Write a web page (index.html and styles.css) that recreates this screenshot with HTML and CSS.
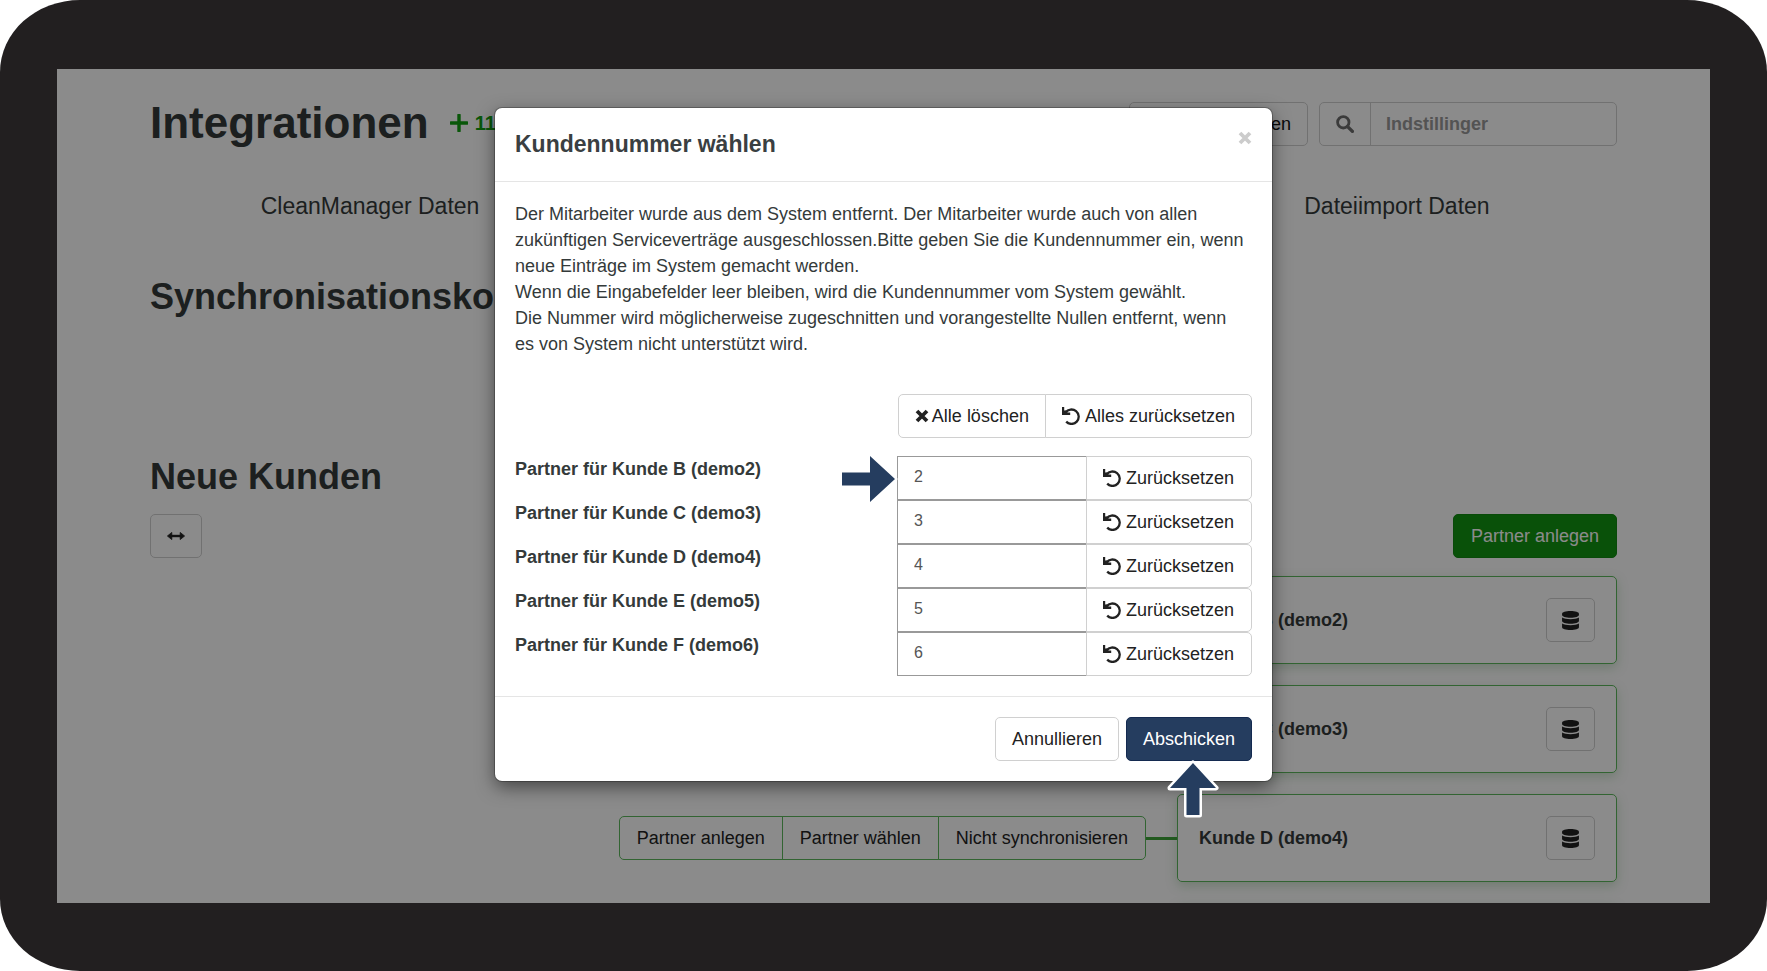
FILE: index.html
```html
<!DOCTYPE html>
<html lang="de">
<head>
<meta charset="utf-8">
<meta name="viewport" content="width=device-width, initial-scale=1">
<title>Integrationen</title>
<link rel="stylesheet" href="styles.css">
</head>
<body>
<svg class="sprite" aria-hidden="true">
  <symbol id="undo" viewBox="0 0 18 18">
    <path d="M3.600 5.600A7.200 7.200 0 1 1 4.200 14.600" fill="none" stroke="currentColor" stroke-width="2.300"/>
    <path d="M0 0H2.200V3.400L4.400 3.200L5.400 5.600H8.200V8H0z"/>
  </symbol>
  <symbol id="cross" viewBox="0 0 14 14">
    <path d="M2 2L12 12M12 2L2 12" fill="none" stroke="currentColor" stroke-width="3.8"/>
  </symbol>
  <symbol id="database" viewBox="0 0 16 18">
    <path d="M0 2.6C0 1 3.4 0 8 0s8 1 8 2.600v1.200C16 5.300 12.600 6.400 8 6.400S0 5.300 0 3.800z"/>
    <path d="M0 6.200C1.800 7.300 4.700 7.800 8 7.800s6.200-.5 8-1.600v3.200C16 10.900 12.600 12 8 12S0 10.900 0 9.400z"/>
    <path d="M0 11.900c1.800 1.100 4.700 1.600 8 1.600s6.200-.5 8-1.600v3.500C16 17 12.600 18 8 18s-8-1-8-2.600z"/>
  </symbol>
</svg>

<div class="frame">
  <div class="screen">
    <main class="page">
      <header class="page-header">
        <h1 class="page-title">Integrationen</h1>
        <span class="counter">
          <svg class="plus" viewBox="0 0 18 18" aria-hidden="true"><path d="M9 1V17M1 9H17" fill="none" stroke="currentColor" stroke-width="3.4" stroke-linecap="round"/></svg>
          11
        </span>
        <div class="page-tools">
          <button class="btn btn-wide" type="button">en</button>
          <div class="search">
            <label class="search-icon" for="search">
              <svg class="icon-md" viewBox="0 0 18 18" role="img" aria-label="Suche"><circle cx="7.300" cy="7.300" r="5.700" fill="none" stroke="currentColor" stroke-width="2.800"/><path d="M11.600 11.600L16.400 16.400" stroke="currentColor" stroke-width="3.400" stroke-linecap="round"/></svg>
            </label>
            <input class="search-input" id="search" type="text" placeholder="Indstillinger">
          </div>
        </div>
      </header>

      <div class="sources">
        <span class="source">CleanManager Daten</span>
        <span></span>
        <span class="source">Dateiimport Daten</span>
      </div>

      <h2 class="section-title">Synchronisationsko</h2>
      <h2 class="section-title section-new">Neue Kunden</h2>

      <div class="actions">
        <button class="btn btn-resize" type="button" aria-label="Verbreitern">
          <svg class="icon-md" viewBox="0 0 18 18" aria-hidden="true"><path d="M4 9H14" stroke="currentColor" stroke-width="2.400"/><path d="M4.800 5.400V12.600L.4 9zM13.200 5.400V12.600L17.600 9z" fill="currentColor" stroke="currentColor" stroke-width=".8" stroke-linejoin="round"/></svg>
        </button>
        <button class="btn btn-green" type="button">Partner anlegen</button>
      </div>

      <div class="rows">
        <div class="row">
          <article class="card"><strong>Kunde B (demo2)</strong><button class="btn btn-icon" type="button" aria-label="Daten"><svg class="icon-db" aria-hidden="true"><use href="#database"/></svg></button></article>
        </div>
        <div class="row">
          <article class="card"><strong>Kunde C (demo3)</strong><button class="btn btn-icon" type="button" aria-label="Daten"><svg class="icon-db" aria-hidden="true"><use href="#database"/></svg></button></article>
        </div>
        <div class="row">
          <div class="group group-green">
            <button class="btn" type="button">Partner anlegen</button>
            <button class="btn" type="button">Partner wählen</button>
            <button class="btn" type="button">Nicht synchronisieren</button>
          </div>
          <span class="connector"></span>
          <article class="card"><strong>Kunde D (demo4)</strong><button class="btn btn-icon" type="button" aria-label="Daten"><svg class="icon-db" aria-hidden="true"><use href="#database"/></svg></button></article>
        </div>
        <div class="row">
          <article class="card"></article>
        </div>
      </div>
    </main>

    <div class="backdrop">
      <section class="modal" role="dialog" aria-labelledby="modal-title">
        <header class="modal-header">
          <h3 class="modal-title" id="modal-title">Kundennummer wählen</h3>
          <button class="close" type="button" aria-label="Schließen"><svg class="icon-sm" aria-hidden="true"><use href="#cross"/></svg></button>
        </header>
        <div class="modal-body">
          <p class="message">Der Mitarbeiter wurde aus dem System entfernt. Der Mitarbeiter wurde auch von allen zukünftigen Serviceverträge ausgeschlossen.Bitte geben Sie die Kundennummer ein, wenn neue Einträge im System gemacht werden.<br>Wenn die Eingabefelder leer bleiben, wird die Kundennummer vom System gewählt.<br>Die Nummer wird möglicherweise zugeschnitten und vorangestellte Nullen entfernt, wenn es&nbsp;von System nicht unterstützt wird.</p>
          <div class="bulk">
            <div class="group">
              <button class="btn" type="button"><svg class="icon-sm" aria-hidden="true"><use href="#cross"/></svg>Alle löschen</button>
              <button class="btn" type="button"><svg class="icon-md" aria-hidden="true"><use href="#undo"/></svg>Alles zurücksetzen</button>
            </div>
          </div>
          <div class="field">
            <label class="field-label" for="n2">Partner für Kunde B (demo2)</label>
            <div class="field-control">
              <input class="field-input" id="n2" type="text" value="2">
              <button class="btn btn-reset" type="button"><svg class="icon-md" aria-hidden="true"><use href="#undo"/></svg>Zurücksetzen</button>
              <svg class="pointer pointer-right" viewBox="0 0 58 52" aria-hidden="true"><path d="M3 19.500H31V3L56 26L31 49V32.500H3z"/></svg>
            </div>
          </div>
          <div class="field">
            <label class="field-label" for="n3">Partner für Kunde C (demo3)</label>
            <div class="field-control">
              <input class="field-input" id="n3" type="text" value="3">
              <button class="btn btn-reset" type="button"><svg class="icon-md" aria-hidden="true"><use href="#undo"/></svg>Zurücksetzen</button>
            </div>
          </div>
          <div class="field">
            <label class="field-label" for="n4">Partner für Kunde D (demo4)</label>
            <div class="field-control">
              <input class="field-input" id="n4" type="text" value="4">
              <button class="btn btn-reset" type="button"><svg class="icon-md" aria-hidden="true"><use href="#undo"/></svg>Zurücksetzen</button>
            </div>
          </div>
          <div class="field">
            <label class="field-label" for="n5">Partner für Kunde E (demo5)</label>
            <div class="field-control">
              <input class="field-input" id="n5" type="text" value="5">
              <button class="btn btn-reset" type="button"><svg class="icon-md" aria-hidden="true"><use href="#undo"/></svg>Zurücksetzen</button>
            </div>
          </div>
          <div class="field">
            <label class="field-label" for="n6">Partner für Kunde F (demo6)</label>
            <div class="field-control">
              <input class="field-input" id="n6" type="text" value="6">
              <button class="btn btn-reset" type="button"><svg class="icon-md" aria-hidden="true"><use href="#undo"/></svg>Zurücksetzen</button>
            </div>
          </div>
        </div>
        <footer class="modal-footer">
          <button class="btn" type="button">Annullieren</button>
          <div class="submit">
            <button class="btn btn-navy" type="submit">Abschicken</button>
            <svg class="pointer pointer-up" viewBox="0 0 52 58" aria-hidden="true"><path d="M26 3L49 28H32.500V55H19.500V28H3z"/></svg>
          </div>
        </footer>
      </section>
    </div>
  </div>
</div>
</body>
</html>
```
FILE: styles.css
```css
* { box-sizing: border-box; }

body {
  margin: 0;
  background: #fff;
  color: #343a3a;
  font: 18px/26px "Liberation Sans", Arial, sans-serif;
}

h1, h2, h3, p { margin: 0; }
svg { display: block; flex: none; fill: currentColor; }
.sprite { position: absolute; width: 0; height: 0; }
.icon-sm { width: 14px; height: 14px; }
.icon-md { width: 18px; height: 18px; }
.icon-db { width: 17px; height: 19px; }

/* Device */
.frame {
  display: flex;
  height: 100vh;
  padding: 69px 57px 68px;
  border-radius: 80px / 72px;
  background: #221f20;
}
.screen {
  position: relative;
  flex: 1;
  overflow: hidden;
  background: #fff;
}

/* Buttons */
.btn {
  display: inline-flex;
  align-items: center;
  justify-content: center;
  gap: 5px;
  height: 44px;
  padding: 0 16px;
  border: 1px solid #d0d0d0;
  border-radius: 5px;
  background: #fff;
  color: #222;
  font: inherit;
  white-space: nowrap;
}
.btn .icon-sm { margin-right: -2px; }
.group { display: flex; }
.group .btn + .btn {
  margin-left: -1px;
  border-top-left-radius: 0;
  border-bottom-left-radius: 0;
}
.group .btn:not(:last-child) {
  border-top-right-radius: 0;
  border-bottom-right-radius: 0;
}
.group-green .btn { padding: 0 17px; border-color: #5cb85c; }
.btn-wide { min-width: 179px; justify-content: flex-end; color: #111; }
.btn-green { padding: 0 17px; border-color: #128812; background: #129512; color: #fff; }
.btn-navy { border-color: #142a50; background: #253d5f; color: #fff; }
.btn-icon { width: 49px; padding: 0; }
.btn-resize { width: 52px; padding: 0; }

/* Page */
.page { padding: 33px 93px 0; }
.page-header { display: flex; align-items: center; height: 44px; }
.page-title { padding-bottom: 2px; font-size: 44px; line-height: 44px; }
.counter {
  display: flex;
  align-items: center;
  gap: 7px;
  margin-left: 21px;
  padding-bottom: 2px;
  color: #12a012;
  font-size: 20px;
  font-weight: bold;
}
.plus { width: 18px; height: 18px; }
.page-tools { display: flex; gap: 11px; margin-left: auto; }
.search {
  display: flex;
  width: 298px;
  height: 44px;
  border: 1px solid #d0d0d0;
  border-radius: 5px;
}
.search-icon {
  display: flex;
  align-items: center;
  justify-content: center;
  width: 51px;
  border-right: 1px solid #d0d0d0;
  color: #6c6c6c;
}
.search-input {
  flex: 1;
  min-width: 0;
  padding: 0 15px;
  border: 0;
  background: none;
  font: inherit;
  font-weight: bold;
}
.search-input::placeholder { color: #999; opacity: 1; }
.sources {
  display: grid;
  grid-template-columns: 3fr 4fr 3fr;
  margin-top: 47px;
  font-size: 23px;
  text-align: center;
}
.section-title { margin-top: 58px; font-size: 36px; line-height: 40px; }
.section-new { margin-top: 140px; }
.actions { display: flex; justify-content: space-between; margin-top: 17px; }
.rows { display: grid; gap: 21px; margin-top: 18px; }
.row { display: flex; align-items: center; justify-content: flex-end; }
.connector { width: 31px; height: 3px; background: #3fa53a; }
.card {
  display: flex;
  align-items: center;
  justify-content: space-between;
  width: 30%;
  height: 88px;
  padding: 0 21px;
  border: 1px solid #5cb85c;
  border-radius: 5px;
  box-shadow: 0 4px 12px rgba(60, 140, 60, 0.25);
}

/* Dialog */
.backdrop {
  position: absolute;
  inset: 0;
  display: flex;
  align-items: flex-start;
  justify-content: center;
  padding-top: 39px;
  background: rgba(0, 0, 0, 0.455);
}
.modal {
  width: 100%;
  max-width: 777px;
  border-radius: 7px;
  background: #fff;
  box-shadow: 0 0 0 1px rgba(0, 0, 0, 0.25), 0 6px 18px rgba(0, 0, 0, 0.5);
}
.modal-header {
  display: flex;
  justify-content: space-between;
  padding: 20px;
  border-bottom: 1px solid #e5e5e5;
}
.modal-title { color: #3a3f42; font-size: 23px; line-height: 33px; }
.close {
  align-self: flex-start;
  padding: 3px 0;
  border: 0;
  background: none;
  color: #ccc;
}
.modal-body { padding: 19px 20px 20px; }
.message { padding-right: 4px; }
.bulk { display: flex; justify-content: flex-end; margin: 37px 0 18px; }
.field { display: flex; justify-content: space-between; }
.field-label { font-weight: bold; }
.field-control { position: relative; display: flex; }
.field-input {
  width: 190px;
  height: 44px;
  padding: 0 16px 2px;
  border: 1px solid #999;
  border-radius: 0;
  background: #fff;
  color: #555;
  font: inherit;
  font-size: 16px;
}
.btn-reset {
  margin-left: -1px;
  padding: 0 17px 0 16px;
  border-top-left-radius: 0;
  border-bottom-left-radius: 0;
}
.modal-footer {
  display: flex;
  justify-content: flex-end;
  gap: 7px;
  padding: 20px;
  border-top: 1px solid #e5e5e5;
}
.submit { position: relative; display: flex; }

/* Hint arrows over the dialog */
.pointer {
  position: absolute;
  overflow: visible;
  fill: #253d5f;
  stroke: #fff;
  stroke-width: 5;
  stroke-linejoin: round;
  paint-order: stroke;
}
.pointer-right { top: -3px; right: 100%; width: 58px; height: 52px; }
.pointer-up { top: 43px; left: 41px; width: 52px; height: 58px; }
```
